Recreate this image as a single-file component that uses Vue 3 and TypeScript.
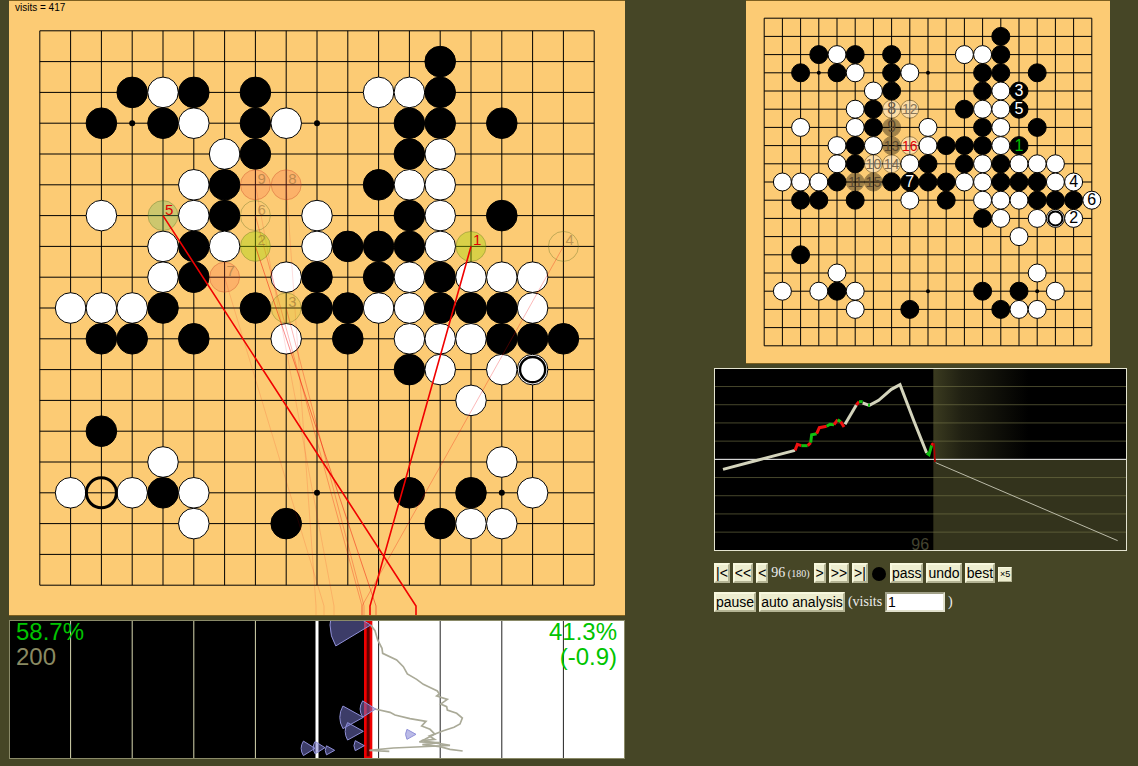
<script setup lang="ts">
import { ref } from 'vue'

type Color = 'b' | 'w'
interface Stone { c: number; r: number; color: Color }
interface Suggestion { c: number; r: number; label: string; tone: string; strong: boolean; endX: number }
interface Ghost { c: number; r: number; color: Color; label: string; ink: string; faded: boolean }
interface Segment { d: string; kind: string }

// One string per row: b = black, w = white, . = empty
const rows: string[] = [
  '...................',
  '.............b.....',
  '...bwb.b...wwb.....',
  '..b.bw.bw...bb.b...',
  '......wb....bw.....',
  '.....wb....bww.....',
  '..w..wb..w..bw.b...',
  '....wbw..wbbbw.....',
  '....wb..wb.bwbwww..',
  '.wwwb..b.bbwwbbbw..',
  '..bb.b..w.b.wwwbbb.',
  '............bw.ww..',
  '..............w....',
  '..b................',
  '....w..........w...',
  '.w.wbw......b.b.w..',
  '.....w..b....bww...',
  '...................',
  '...................',
]

const stones: Stone[] = rows.flatMap((row, r) =>
  [...row].flatMap((ch, c) => (ch === '.' ? [] : [{ c, r, color: ch as Color }])),
)

const lines = Array.from({ length: 19 }, (_, i) => i)
const stars = [3, 9, 15].flatMap((c) => [3, 9, 15].map((r) => ({ c, r })))

// Main board: 616 units wide, one cell is a twentieth
const at = (i: number): number => (i + 1) * 30.8
// Variation board: 364 units wide
const sub = (i: number): number => (i + 1) * 18.2

const suggestions: Suggestion[] = [
  { c: 7, r: 5, label: '9', tone: 'red', strong: false, endX: 325 },
  { c: 8, r: 5, label: '8', tone: 'red', strong: false, endX: 307 },
  { c: 6, r: 8, label: '7', tone: 'red', strong: false, endX: 315 },
  { c: 7, r: 6, label: '6', tone: 'plain', strong: false, endX: 353 },
  { c: 17, r: 7, label: '4', tone: 'plain', strong: false, endX: 353 },
  { c: 8, r: 9, label: '3', tone: 'gold', strong: false, endX: 355 },
  { c: 7, r: 7, label: '2', tone: 'lime', strong: false, endX: 367 },
  { c: 4, r: 6, label: '5', tone: 'green', strong: true, endX: 407 },
  { c: 14, r: 7, label: '1', tone: 'lime', strong: true, endX: 361 },
]

const faint = new Set(['9', '8', '7'])
const lineKind = (s: Suggestion): string =>
  s.strong ? 'strong' : faint.has(s.label) ? 'faint' : s.label === '2' ? 'mid' : 'soft'

const ghosts: Ghost[] = [
  { c: 14, r: 7, color: 'b', label: '1', ink: '#00c000', faded: false },
  { c: 17, r: 11, color: 'w', label: '2', ink: '#000', faded: false },
  { c: 14, r: 4, color: 'b', label: '3', ink: '#fff', faded: false },
  { c: 17, r: 9, color: 'w', label: '4', ink: '#000', faded: false },
  { c: 14, r: 5, color: 'b', label: '5', ink: '#fff', faded: false },
  { c: 18, r: 10, color: 'w', label: '6', ink: '#000', faded: false },
  { c: 8, r: 9, color: 'b', label: '7', ink: '#fff', faded: false },
  { c: 7, r: 5, color: 'w', label: '8', ink: '#6b5a44', faded: true },
  { c: 7, r: 6, color: 'b', label: '9', ink: '#5c4a30', faded: true },
  { c: 6, r: 8, color: 'w', label: '10', ink: '#7d6b50', faded: true },
  { c: 5, r: 9, color: 'b', label: '11', ink: '#5c4a30', faded: true },
  { c: 8, r: 5, color: 'w', label: '12', ink: '#8a7658', faded: true },
  { c: 7, r: 7, color: 'b', label: '13', ink: '#5c4a30', faded: true },
  { c: 7, r: 8, color: 'w', label: '14', ink: '#7d6b50', faded: true },
  { c: 6, r: 9, color: 'b', label: '15', ink: '#5c4a30', faded: true },
  { c: 8, r: 7, color: 'w', label: '16', ink: '#e00000', faded: true },
]

// A fan that opens to the left of its apex
function fan(x: number, y: number, r: number, degrees = 29): string {
  const a = (degrees * Math.PI) / 180
  const dx = r * Math.cos(a)
  const dy = r * Math.sin(a)
  return `M${x} ${y}L${x - dx} ${y - dy}A${r} ${r} 0 0 0 ${x - dx} ${y + dy}Z`
}

const fans: string[] = [
  fan(1085, 15, 122, 31),
  fan(1100, 267, 46, 32),
  fan(1063, 292, 70),
  fan(1063, 334, 54),
  fan(1221, 343, 31),
  fan(1066, 377, 31),
  fan(977, 391, 28),
  fan(948, 383, 35, 32),
  fan(918, 385, 41, 32),
]

const winGrid = [1, 2, 3, 4, 5, 6, 7, 8, 9].map((i) => ({
  x: i * 184.8,
  kind: i === 5 ? 'half' : i < 5 ? 'light' : 'dark',
}))

const history: Segment[] = [
  { d: 'M27 304L133 276L243 247', kind: 'main' },
  { d: 'M243 247L250 229L262 233', kind: 'loss' },
  { d: 'M262 233L281 233', kind: 'gain' },
  { d: 'M281 233L290 224', kind: 'loss' },
  { d: 'M290 224L293 200L308 197', kind: 'gain' },
  { d: 'M308 197L316 179L338 175', kind: 'loss' },
  { d: 'M338 175L348 169L360 170', kind: 'gain' },
  { d: 'M360 170L371 155', kind: 'loss' },
  { d: 'M371 155L380 161', kind: 'gain' },
  { d: 'M380 161L390 177', kind: 'loss' },
  { d: 'M393 169L427 111', kind: 'main' },
  { d: 'M427 111L435 101', kind: 'loss' },
  { d: 'M435 101L446 101', kind: 'gain' },
  { d: 'M446 105L466 112L494 97L532 64L558 50L600 160L638 255', kind: 'main' },
  { d: 'M462 112L468 112', kind: 'gain' },
  { d: 'M638 255L645 260L653 232', kind: 'gain' },
  { d: 'M653 232L658 226', kind: 'loss' },
]

const visits = ref('1')
</script>

<template>
  <main class="page">
    <section class="column">
      <svg class="board" viewBox="0 0 616 616" role="img" aria-label="Main board">
        <rect class="wood" width="616" height="616" />
        <g class="grid">
          <line v-for="i in lines" :key="'v' + i" :x1="at(i)" :x2="at(i)" :y1="at(0)" :y2="at(18)" />
          <line v-for="i in lines" :key="'h' + i" :x1="at(0)" :x2="at(18)" :y1="at(i)" :y2="at(i)" />
        </g>
        <circle v-for="s in stars" :key="s.c + '-' + s.r" :cx="at(s.c)" :cy="at(s.r)" r="3" />
        <circle v-for="s in stones" :key="s.c + '/' + s.r" :class="s.color" :cx="at(s.c)" :cy="at(s.r)" r="15.3" />
        <circle class="ring" :cx="at(16)" :cy="at(11)" r="12.6" stroke-width="2.4" />
        <circle class="ring" :cx="at(2)" :cy="at(15)" r="15" stroke-width="3" />
        <g v-for="s in suggestions" :key="s.label">
          <circle class="hint" :class="s.tone" :cx="at(s.c)" :cy="at(s.r)" r="15" />
          <path
            class="ray"
            :class="lineKind(s)"
            :d="`M${at(s.c)} ${at(s.r)}L${s.endX} 606V616`"
          />
          <text class="order" :class="{ vivid: s.strong }" :x="at(s.c) + 2" :y="at(s.r) - 1">{{ s.label }}</text>
        </g>
        <text class="visits" x="6" y="11">visits = 417</text>
        <line class="edge" x1="0" x2="616" y1="0.5" y2="0.5" />
        <line class="edge" x1="0" x2="616" y1="615.5" y2="615.5" />
      </svg>

      <svg class="winrate" viewBox="0 0 1848 417" role="img" aria-label="Winrate bar">
        <defs>
          <clipPath id="bar">
            <rect width="1848" height="417" />
          </clipPath>
        </defs>
        <rect width="1085" height="417" />
        <rect x="1085" width="763" height="417" fill="#fff" />
        <line v-for="g in winGrid" :key="g.x" class="tick" :class="g.kind" :x1="g.x" :x2="g.x" y1="0" y2="417" />
        <rect x="1069" y="4" width="17" height="409" fill="#600000" stroke="#f00000" stroke-width="8" />
        <path
          class="trace"
          d="M1085 15L1098 32L1106 60L1119 85L1121 100L1163 120L1183 140L1195 162L1223 178L1243 193L1268 205L1285 213L1291 222L1283 228L1315 238L1295 252L1313 260L1315 270L1343 280L1360 294L1353 312L1335 322L1303 332L1278 342L1248 358L1231 366L1293 368L1240 374L1293 380L1323 388L1361 393"
        />
        <path
          class="trace"
          d="M1098 267L1143 277L1158 285L1203 296L1251 304L1238 318L1263 328L1277 342L1261 348L1277 358L1238 362L1323 376L1288 378L1153 384L1081 391L1141 394"
        />
        <g clip-path="url(#bar)">
          <path v-for="(f, i) in fans" :key="i" class="fan" :d="f" />
        </g>
        <g class="rate">
          <text x="21" y="60">58.7%</text>
          <text class="muted" x="21" y="134">200</text>
          <text x="1824" y="60" text-anchor="end">41.3%</text>
          <text x="1824" y="134" text-anchor="end">(-0.9)</text>
        </g>
        <rect class="frame" x="1.5" y="1.5" width="1845" height="414" />
      </svg>
    </section>

    <section class="column">
      <div class="side">
        <svg class="board" viewBox="0 0 364 364" role="img" aria-label="Variation board">
          <rect class="wood" width="364" height="364" />
          <g class="grid">
            <line v-for="i in lines" :key="'v' + i" :x1="sub(i)" :x2="sub(i)" :y1="sub(0)" :y2="sub(18)" />
            <line v-for="i in lines" :key="'h' + i" :x1="sub(0)" :x2="sub(18)" :y1="sub(i)" :y2="sub(i)" />
          </g>
          <circle v-for="s in stars" :key="s.c + '-' + s.r" :cx="sub(s.c)" :cy="sub(s.r)" r="2" />
          <circle v-for="s in stones" :key="s.c + '/' + s.r" :class="s.color" :cx="sub(s.c)" :cy="sub(s.r)" r="9" />
          <circle class="ring" :cx="sub(16)" :cy="sub(11)" r="7" stroke-width="2" />
          <g v-for="g in ghosts" :key="g.label">
            <circle :class="[g.color, { faded: g.faded }]" :cx="sub(g.c)" :cy="sub(g.r)" r="9" />
            <text
              class="move"
              :class="{ long: g.label.length > 1 }"
              :x="sub(g.c)"
              :y="sub(g.r) + 5"
              :fill="g.ink"
            >{{ g.label }}</text>
          </g>
          <line class="edge" x1="0" x2="364" y1="0.5" y2="0.5" />
          <line class="edge" x1="0" x2="364" y1="363.5" y2="363.5" />
        </svg>
      </div>

      <svg class="history" viewBox="0 0 1239 549" role="img" aria-label="Winrate history">
        <defs>
          <linearGradient id="future">
            <stop offset="0" stop-color="#3b3b20" />
            <stop offset="0.3" stop-color="#202012" />
            <stop offset="1" stop-color="#000" />
          </linearGradient>
        </defs>
        <rect width="1239" height="549" />
        <rect x="658" width="285" height="274" fill="url(#future)" />
        <rect x="658" y="274" width="581" height="275" fill="#33331c" />
        <line v-for="i in [1, 2, 3, 4, 6, 7, 8, 9]" :key="i" class="level" x1="0" x2="1239" :y1="i * 54.6 + 1" :y2="i * 54.6 + 1" />
        <line class="middle" x1="0" x2="1239" y1="274" y2="274" />
        <text class="count" x="592" y="545">96</text>
        <path v-for="(s, i) in history" :key="i" class="seg" :class="s.kind" :d="s.d" />
        <path class="drop" d="M660 226L663 282" />
        <path class="rest" d="M665 284L1211 518" />
        <rect class="box" x="1.5" y="1.5" width="1236" height="546" />
      </svg>

      <div class="controls">
        <button type="button">|&lt;</button>
        <button type="button">&lt;&lt;</button>
        <button type="button">&lt;</button>
        <span class="position">96<small> (180)</small></span>
        <button type="button">&gt;</button>
        <button type="button">&gt;&gt;</button>
        <button type="button">&gt;|</button>
        <span class="turn" role="img" aria-label="Black to play"></span>
        <button type="button">pass</button>
        <button type="button">undo</button>
        <button type="button">best</button>
        <button type="button" class="tiny">×5</button>
      </div>
      <div class="controls">
        <button type="button">pause</button>
        <button type="button">auto analysis</button>
        <label for="visits">(visits</label>
        <input id="visits" v-model="visits" type="text" />
        <span>)</span>
      </div>
    </section>
  </main>
</template>

<style>
body {
  margin: 0;
  background: #464626;
}
</style>

<style scoped>
.page {
  display: grid;
  grid-template-columns: minmax(0, 616fr) minmax(0, 413fr);
  column-gap: 89px;
  align-items: start;
  padding: 0 11px 0 9px;
  font-family: "Liberation Sans", Arial, sans-serif;
}

.column {
  display: flex;
  flex-direction: column;
}

svg {
  display: block;
  width: 100%;
  height: auto;
  overflow: visible;
}

.side {
  padding: 0 17px 0 32px;
}

.winrate,
.history {
  margin-top: 4px;
}

.wood {
  fill: #fccb74;
}

.grid line {
  stroke: #000;
  stroke-width: 1;
}

.edge {
  stroke: #7c5f20;
  stroke-width: 1;
}

.b {
  fill: #000;
  stroke: #000;
}

.w {
  fill: #fff;
  stroke: #000;
}

.faded {
  opacity: 0.36;
}

.ring {
  fill: none;
  stroke: #000;
}

.hint {
  stroke: #556b20;
  stroke-opacity: 0.35;
  fill-opacity: 0.25;
}

.hint.red {
  fill: #ff5040;
  fill-opacity: 0.2;
  stroke: #c04020;
}

.hint.plain {
  fill: none;
}

.hint.gold {
  fill: #d0c020;
}

.hint.lime {
  fill: #a0d800;
  fill-opacity: 0.38;
}

.hint.green {
  fill: #60c060;
  fill-opacity: 0.3;
}

.ray {
  fill: none;
  stroke: #f00000;
  stroke-width: 1;
}

.ray.strong {
  stroke-width: 1.6;
}

.ray.mid {
  opacity: 0.45;
}

.ray.soft {
  opacity: 0.28;
}

.ray.faint {
  opacity: 0.13;
}

.order {
  font-size: 15px;
  fill: #806030;
  fill-opacity: 0.5;
}

.order.vivid {
  fill: #e00000;
  fill-opacity: 1;
}

.visits {
  font-size: 10px;
}

.move {
  font-size: 16px;
  text-anchor: middle;
}

.move.long {
  font-size: 14px;
}

.tick {
  stroke-width: 3;
}

.tick.light {
  stroke: #d8d8b0;
}

.tick.dark {
  stroke: #222;
}

.tick.half {
  stroke: #fff;
  stroke-width: 9;
}

.trace {
  fill: none;
  stroke: #aaaa98;
  stroke-width: 5;
}

.fan {
  fill: #7878d0;
  fill-opacity: 0.5;
  stroke: #9090d8;
  stroke-width: 3;
}

.rate {
  font-size: 72px;
  fill: #00c400;
}

.rate .muted {
  fill: #8a8a62;
}

.frame {
  fill: none;
  stroke: #8a8a68;
  stroke-width: 3;
}

.level {
  stroke: #77774a;
  stroke-opacity: 0.6;
  stroke-width: 3;
}

.middle {
  stroke: #fff;
  stroke-width: 3;
}

.count {
  font-size: 48px;
  fill: #444430;
}

.seg {
  fill: none;
  stroke-width: 9;
}

.seg.main {
  stroke: #d4d4bc;
}

.seg.loss {
  stroke: #f01010;
}

.seg.gain {
  stroke: #10c010;
}

.drop {
  stroke: #b00000;
  stroke-width: 5;
}

.rest {
  stroke: #bbbba8;
  stroke-width: 3;
}

.box {
  fill: none;
  stroke: #e4e4d0;
  stroke-width: 3;
}

.controls {
  display: flex;
  align-items: center;
  gap: 3px;
  min-height: 20px;
  margin-top: 12px;
  color: #eee;
  font-family: "Liberation Serif", "Times New Roman", serif;
  font-size: 14px;
  line-height: 16px;
}

.controls + .controls {
  margin-top: 9px;
}

button,
input {
  box-sizing: border-box;
  height: 20px;
  margin: 0;
  border: 2px solid;
  border-color: #f8f8de #b4b494 #b4b494 #f8f8de;
  border-radius: 0;
  color: #000;
  font-family: "Liberation Sans", Arial, sans-serif;
  font-size: 14px;
  line-height: 16px;
}

button {
  padding: 0;
  background: #ededcf;
}

button.tiny {
  height: 15px;
  margin-top: 3px;
  border-width: 1px;
  padding: 0 1px;
  font-size: 9px;
  line-height: 13px;
}

input {
  width: 60px;
  padding: 0 1px;
  border-color: #a0a088 #e0e0cc #e0e0cc #a0a088;
  background: #fff;
}

small {
  font-size: 10px;
}

.position {
  margin-right: 1px;
}

.turn {
  width: 14px;
  height: 14px;
  margin: 2px 1px 0;
  border-radius: 50%;
  background: #000;
}
</style>
